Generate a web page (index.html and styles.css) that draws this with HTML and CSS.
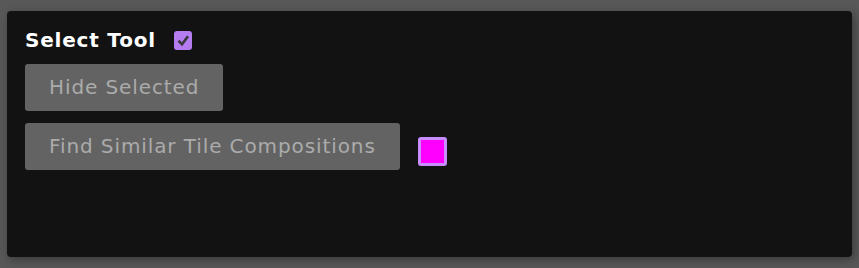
FILE: index.html
```html
<!DOCTYPE html>
<html lang="en">
<head>
    <meta charset="UTF-8">
    <title>Select Tool</title>
    <link rel="stylesheet" href="styles.css">
</head>
<body>
    <div class="tool-panel">
        <div class="tool-header">
            <span class="tool-title">Select Tool</span>
            <span class="check-box">
                <svg width="18" height="18" viewBox="0 0 18 18">
                    <path d="M4.5 9.8 L8 13.2 L14 5.2" fill="none" stroke="#383838" stroke-width="2.6"/>
                </svg>
            </span>
        </div>
        <div class="tool-row">
            <button class="btn">Hide Selected</button>
        </div>
        <div class="tool-row">
            <button class="btn">Find Similar Tile Compositions</button>
            <span class="color-swatch"></span>
        </div>
    </div>
</body>
</html>
```

FILE: styles.css
```css
* {
    margin: 0;
    padding: 0;
    box-sizing: border-box;
}

body {
    font-family: 'DejaVu Sans', Verdana, sans-serif;
    background: #585858;
    padding: 11px 7px;
    height: 268px;
    overflow: hidden;
}

.tool-panel {
    background: #121212;
    height: 246px;
    border-radius: 4px;
    padding: 20px 18px;
    box-shadow: 2px 3px 10px rgba(0, 0, 0, 0.35);
    display: flex;
    flex-direction: column;
    gap: 12px;
}

.tool-header {
    display: flex;
    align-items: center;
    gap: 18px;
    height: 22px;
    margin-top: -2px;
    margin-bottom: 1px;
}

.tool-title {
    color: #ffffff;
    font-weight: bold;
    font-size: 20px;
    letter-spacing: 0.8px;
}

.check-box {
    width: 18px;
    height: 19px;
    background: #b57cf0;
    border-radius: 3px;
    display: flex;
    align-items: center;
    justify-content: center;
}

.tool-row {
    display: flex;
    align-items: flex-start;
}

.btn {
    font-family: inherit;
    font-size: 20px;
    letter-spacing: 0.9px;
    line-height: 23px;
    height: 47px;
    color: #ababab;
    background: #636363;
    border: none;
    border-radius: 3px;
    padding: 12px 24px;
    cursor: pointer;
}

.color-swatch {
    width: 29px;
    height: 29px;
    margin-left: 18px;
    margin-top: 14px;
    background: #ff00ff;
    border: 3px solid #c98cff;
    border-radius: 3px;
}
```
